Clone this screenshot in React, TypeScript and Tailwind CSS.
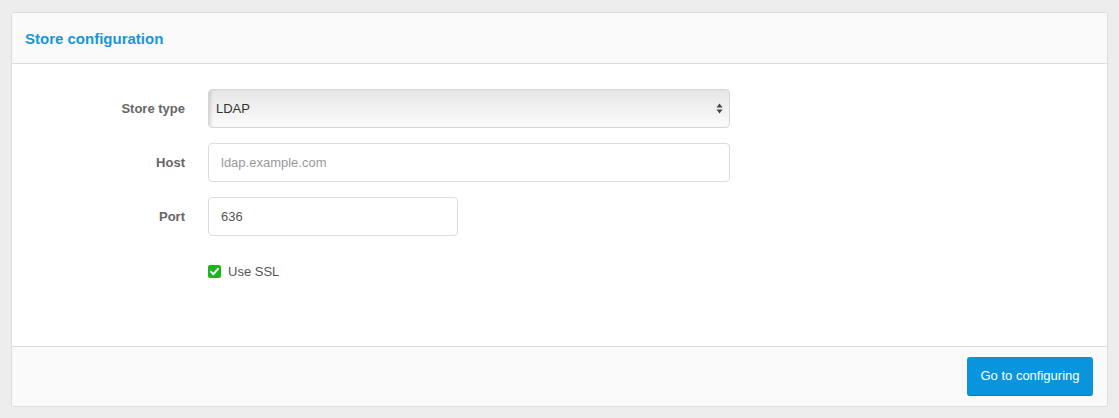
import React from "react";

export default function App() {
  const font = { fontFamily: '"Liberation Sans", Arial, Helvetica, sans-serif' };
  return (
    <div className="w-[1119px] h-[418px] bg-[#ededed] pt-[12px] px-[11px]" style={font}>
      <div className="w-[1097px] h-[395px] bg-white border border-[#dddddd] rounded-[3px] flex flex-col overflow-hidden">
        <div className="h-[51px] shrink-0 bg-[#fafafa] border-b border-[#dddddd] flex items-center px-[13px]">
          <span className="text-[15px] font-bold text-[#1596da] leading-none">Store configuration</span>
        </div>
        <div className="flex-1 pt-[25px] flex flex-col gap-[15px]">
          <div className="flex items-center">
            <label className="w-[173px] text-right text-[13px] font-bold text-[#666666]">Store type</label>
            <div className="ml-[23px] w-[522px] h-[39px] rounded-[4px] border border-[#d6d6d6] bg-gradient-to-b from-[#e6e6e6] to-[#fbfbfb] shadow-[inset_3px_0_3px_-1px_rgba(0,0,0,0.12)] flex items-center justify-between pl-[7px] pr-[6px]">
              <span className="text-[13px] text-[#333333]">LDAP</span>
              <svg width="7" height="11" viewBox="0 0 7 11">
                <path d="M3.5 0.5 L6.5 4.5 L0.5 4.5 Z" fill="#444" />
                <path d="M3.5 10.5 L6.5 6.5 L0.5 6.5 Z" fill="#444" />
              </svg>
            </div>
          </div>
          <div className="flex items-center">
            <label className="w-[173px] text-right text-[13px] font-bold text-[#666666]">Host</label>
            <div className="ml-[23px] w-[522px] h-[39px] rounded-[4px] border border-[#dddddd] bg-white flex items-center px-[12px]">
              <span className="text-[13px] text-[#999999]">ldap.example.com</span>
            </div>
          </div>
          <div className="flex items-center">
            <label className="w-[173px] text-right text-[13px] font-bold text-[#666666]">Port</label>
            <div className="ml-[23px] w-[250px] h-[39px] rounded-[4px] border border-[#dddddd] bg-white flex items-center px-[12px]">
              <span className="text-[13px] text-[#555555]">636</span>
            </div>
          </div>
          <div className="flex items-center ml-[196px] mt-[11px]">
            <svg width="13" height="13" viewBox="0 0 13 13">
              <rect x="0" y="0" width="13" height="13" rx="2" fill="#1fb41f" />
              <path d="M3 6.8 L5.4 9.2 L10 3.8" fill="none" stroke="#ffffff" strokeWidth="2" strokeLinecap="round" strokeLinejoin="round" />
            </svg>
            <span className="ml-[7px] text-[13px] text-[#555555]">Use SSL</span>
          </div>
        </div>
        <div className="h-[60px] shrink-0 bg-[#fafafa] border-t border-[#dddddd] flex items-start justify-end pt-[10px] pr-[14px]">
          <button className="w-[126px] h-[39px] rounded-[3px] bg-[#0995dd] border-b border-[#0780c0] text-white text-[13px]">
            Go to configuring
          </button>
        </div>
      </div>
    </div>
  );
}
